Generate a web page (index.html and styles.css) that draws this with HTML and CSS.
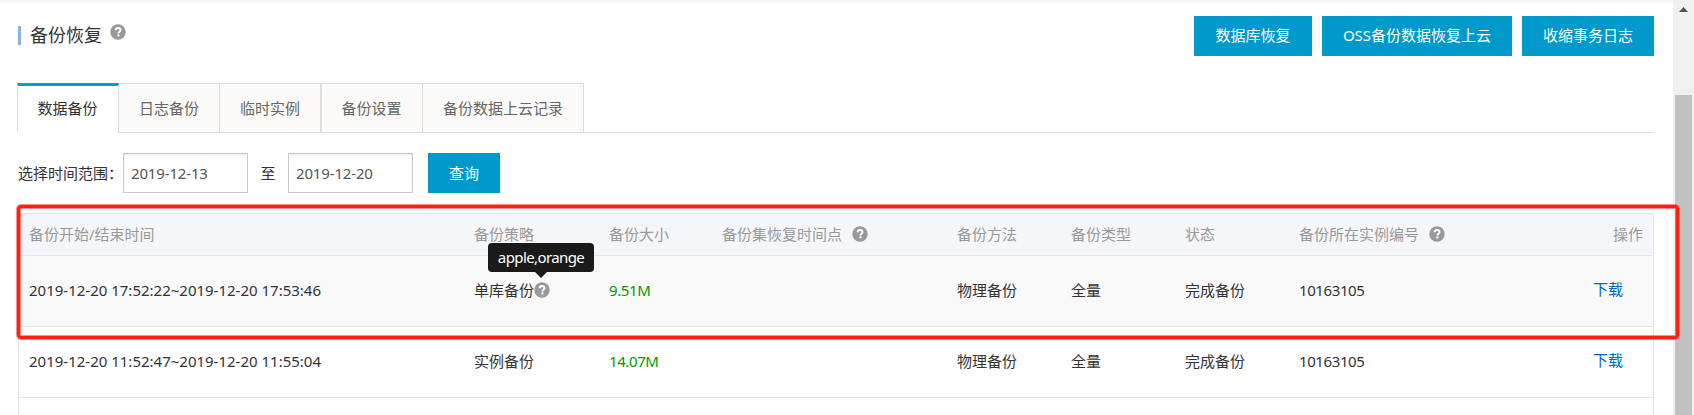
FILE: index.html
```html
<!DOCTYPE html>
<html lang="zh-CN">
<head>
<meta charset="utf-8">
<title>备份恢复</title>
<link rel="stylesheet" href="styles.css">
</head>
<body>
<svg class="defs" width="0" height="0" aria-hidden="true">
  <symbol id="help" viewBox="0 0 16 16">
    <circle cx="8" cy="8" r="7.7" fill="#999"/>
    <path d="M5.6 6.2C5.7 4.7 6.7 4 8 4c1.4 0 2.5.8 2.5 2.1 0 1.7-2.1 1.7-2.1 3.3" fill="none" stroke="#fff" stroke-width="1.9"/>
    <rect x="7.4" y="10.4" width="2" height="2" fill="#fff"/>
  </symbol>
</svg>
<div class="app">
  <main class="page">
    <header class="page-head">
      <h1 class="title">备份恢复</h1>
      <svg class="help title-help"><use href="#help"/></svg>
      <div class="actions">
        <button class="btn act-db">数据库恢复</button>
        <button class="btn act-oss">OSS备份数据恢复上云</button>
        <button class="btn act-log">收缩事务日志</button>
      </div>
    </header>
    <nav class="tabs">
      <a class="tab active">数据备份</a>
      <a class="tab">日志备份</a>
      <a class="tab">临时实例</a>
      <a class="tab double">备份设置</a>
      <a class="tab wide">备份数据上云记录</a>
    </nav>
    <div class="filter">
      <span class="label">选择时间范围：</span>
      <input class="date" value="2019-12-13">
      <span class="to">至</span>
      <input class="date" value="2019-12-20">
      <button class="btn query">查询</button>
    </div>
    <section class="table">
      <div class="row head">
        <span>备份开始/结束时间</span><span>备份策略</span><span>备份大小</span>
        <span>备份集恢复时间点<svg class="help head-help"><use href="#help"/></svg></span>
        <span>备份方法</span><span>备份类型</span><span>状态</span>
        <span>备份所在实例编号<svg class="help head-help"><use href="#help"/></svg></span>
        <span class="op">操作</span>
      </div>
      <div class="row shaded">
        <span>2019-12-20 17:52:22~2019-12-20 17:53:46</span>
        <span>单库备份<i class="tip-anchor"><svg class="help"><use href="#help"/></svg><b class="tip">apple,orange</b></i></span>
        <span class="size">9.51M</span><span></span>
        <span>物理备份</span><span>全量</span><span>完成备份</span><span class="num">10163105</span>
        <a class="link">下载</a>
      </div>
      <div class="row">
        <span>2019-12-20 11:52:47~2019-12-20 11:55:04</span>
        <span>实例备份</span>
        <span class="size">14.07M</span><span></span>
        <span>物理备份</span><span>全量</span><span>完成备份</span><span class="num">10163105</span>
        <a class="link">下载</a>
      </div>
      <div class="row"></div>
    </section>
  </main>
  <aside class="scrollbar">
    <svg class="arrow" width="9" height="5" viewBox="0 0 9 5"><path d="M4.5 0 9 5H0z" fill="#505050"/></svg>
    <div class="thumb"></div>
  </aside>
  <div class="highlight"></div>
</div>
</body>
</html>
```
FILE: styles.css
```css
* { box-sizing: border-box; }
body {
  margin: 0;
  height: 415px;
  overflow: hidden;
  background: #fff;
  color: #333;
  font: 15px/20px "Noto Sans", "Noto Sans CJK SC", sans-serif;
}
.defs { display: none; }
.app { position: relative; display: flex; height: 415px; overflow: hidden; }
.page {
  flex: 1;
  padding: 16px 19px 0 18px;
  background: linear-gradient(#f6f6f6, #fff 5px);
}
.help { width: 16px; height: 16px; flex: none; }

.page-head { display: flex; height: 67px; align-items: flex-start; }
.title {
  margin: 10px 0 0;
  padding-left: 9px;
  border-left: 3px solid #86b5e0;
  font-size: 18px;
  font-weight: 400;
  line-height: 19px;
  height: 19px;
}
.title-help { margin: 8px 0 0 8px; }
.actions { display: flex; gap: 10px; margin-left: auto; }
.btn {
  height: 40px;
  padding: 0 0 2px;
  border: 0;
  background: #09c;
  color: #fff;
  font: inherit;
  text-align: center;
  white-space: nowrap;
}
.act-db { width: 118px; }
.act-oss { width: 190px; }
.act-log { width: 132px; }

.tabs { display: flex; height: 50px; border-bottom: 1px solid #ddd; margin-left: -1px; }
.tab {
  width: 101px;
  height: 49px;
  padding-top: 14px;
  border: 1px solid #ddd;
  border-width: 1px 1px 0 0;
  background: #fbfaf8;
  color: #666;
  text-align: center;
}
.tab.active {
  width: 102px;
  height: 50px;
  padding: 12px 1px 0 0;
  border-left-width: 1px;
  border-top: 3px solid #00a2ca;
  background: #fff;
  color: #333;
}
.tab.double { width: 102px; padding-right: 1px; border-left-width: 1px; }
.tab.wide { width: 161px; }

.filter { display: flex; height: 80px; padding-top: 20px; align-items: flex-start; }
.label { width: 105px; padding-top: 10px; white-space: nowrap; }
.date {
  width: 125px;
  height: 40px;
  padding: 0 7px;
  border: 1px solid #c8c8c8;
  box-shadow: inset 0 1px 1px rgba(0, 0, 0, .08);
  color: #555;
  font: inherit;
  letter-spacing: -.15px;
}
.to { width: 40px; padding-top: 10px; text-align: center; }
.query { width: 72px; margin-left: 15px; padding-bottom: 0; }

.table { width: 1636px; border: 1px solid #e1e6eb; border-bottom: 0; }
.row {
  display: grid;
  grid-template-columns: 445px 135px 113px 235px 114px 114px 114px 200px 1fr;
  height: 71px;
  padding: 0 10px 2px;
  align-items: center;
  border-bottom: 1px solid #e1e6eb;
  white-space: nowrap;
}
.row.head { height: 42px; background: #f5f6fa; color: #999; }
.row.shaded { background: #f9f9f9; }
.head-help { margin-left: 10px; vertical-align: -2px; }
.op { text-align: right; }
.size { color: #090; letter-spacing: -.4px; }
.num { letter-spacing: -.4px; }
.link { padding: 0 20px 2px 0; color: #06c; text-align: right; }
.tip-anchor { position: relative; display: inline-block; height: 16px; vertical-align: -2px; }
.tip-anchor .help { display: block; }
.tip {
  position: absolute;
  left: -46px;
  top: -39px;
  width: 106px;
  height: 29px;
  border-radius: 4px;
  background: #1a1a1a;
  color: #fff;
  font: 15px/28px "Noto Sans", sans-serif;
  letter-spacing: -.6px;
  text-align: center;
}
.tip::after {
  content: "";
  position: absolute;
  left: 47px;
  top: 29px;
  border: solid transparent;
  border-width: 6px 6px 0;
  border-top-color: #1a1a1a;
}

.scrollbar { width: 21px; padding: 7px 2px 0; background: #f0f0f0; }
.arrow { display: block; margin: 0 auto 83px; }
.thumb { height: 320px; background: #c1c1c1; }
.highlight {
  position: absolute;
  left: 17px;
  top: 205px;
  width: 1662px;
  height: 134px;
  border: 3px solid #ff2010;
  border-radius: 4px;
  box-shadow: 0 0 0 1px rgba(255, 32, 16, .5), inset 0 0 0 1px rgba(255, 32, 16, .5);
}
```
